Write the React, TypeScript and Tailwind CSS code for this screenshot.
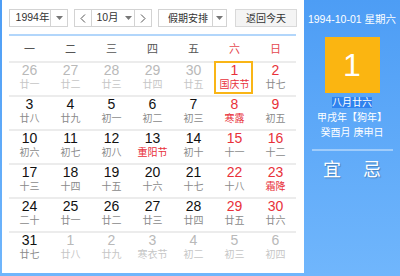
import React from 'react';

type Day = { d: number; l: string; other?: boolean; fest?: boolean; today?: boolean };

const weekNames = ['一', '二', '三', '四', '五', '六', '日'];

const o = (d: number, l: string, fest = false): Day => ({ d, l, other: true, fest });
const c = (d: number, l: string, fest = false): Day => ({ d, l, fest });

const weeks: Day[][] = [
  [o(26, '廿一'), o(27, '廿二'), o(28, '廿三'), o(29, '廿四'), o(30, '廿五'), { d: 1, l: '国庆节', fest: true, today: true }, c(2, '廿七')],
  [c(3, '廿八'), c(4, '廿九'), c(5, '初一'), c(6, '初二'), c(7, '初三'), c(8, '寒露', true), c(9, '初五')],
  [c(10, '初六'), c(11, '初七'), c(12, '初八'), c(13, '重阳节', true), c(14, '初十'), c(15, '十一'), c(16, '十二')],
  [c(17, '十三'), c(18, '十四'), c(19, '十五'), c(20, '十六'), c(21, '十七'), c(22, '十八'), c(23, '霜降', true)],
  [c(24, '二十'), c(25, '廿一'), c(26, '廿二'), c(27, '廿三'), c(28, '廿四'), c(29, '廿五'), c(30, '廿六')],
  [c(31, '廿七'), o(1, '廿八'), o(2, '廿九'), o(3, '寒衣节', true), o(4, '初二'), o(5, '初三'), o(6, '初四')],
];

const Caret = () => (
  <svg width="7" height="4" viewBox="0 0 7 4">
    <path d="M0 0h7L3.5 4z" fill="#777" />
  </svg>
);

const Chevron = ({ right }: { right?: boolean }) => (
  <svg width="6" height="9" viewBox="0 0 6 9">
    <path d={right ? 'M1 0.5l4 4-4 4' : 'M5 0.5l-4 4 4 4'} fill="none" stroke="#555" strokeWidth="1" />
  </svg>
);

const DayCell = ({ day, col }: { day: Day; col: number }) => {
  const weekend = col >= 5;
  const numColor = day.other ? 'text-[#b9b9b9]' : weekend ? 'text-[#e8313a]' : 'text-[#111]';
  const lunarColor = day.other ? 'text-[#c6c6c6]' : day.fest ? 'text-[#e8313a]' : 'text-[#8a8a8a]';
  return (
    <div className="relative flex flex-col items-center">
      {day.today && (
        <span className="absolute -top-[2px] left-0 w-[39px] h-[33px] border-2 border-[#f9b516]" />
      )}
      <span className={`text-[14px] leading-[15px] font-['Liberation_Sans',sans-serif] ${numColor}`}>{day.d}</span>
      <span className={`mt-[1px] text-[10px] leading-[12px] ${lunarColor}`}>{day.l}</span>
    </div>
  );
};

export default function App() {
  return (
    <div className="w-[400px] h-[276px] flex items-start pl-[2px] bg-gradient-to-b from-[#4d9df5] to-[#70b6fc] font-['Liberation_Sans','Noto_Sans_CJK_SC',sans-serif]">
      {/* calendar panel */}
      <div className="w-[302px] h-[273px] bg-white pl-[7px] pt-[9px]">
        {/* toolbar */}
        <div className="flex h-[18px] text-[10.5px] text-[#333]">
          <div className="flex w-[59px] border border-[#d3d3d3]">
            <div className="w-[40px] flex items-center justify-center pl-[5px]">1994年</div>
            <div className="flex-1 flex items-center justify-center border-l border-[#d3d3d3]">
              <Caret />
            </div>
          </div>
          <div className="ml-[6px] flex w-[78px] border border-[#d3d3d3]">
            <div className="w-[16px] flex items-center justify-center">
              <Chevron />
            </div>
            <div className="flex-1 flex items-center justify-center gap-[6px] border-x border-[#d3d3d3] pl-[2px]">
              <span>10月</span>
              <Caret />
            </div>
            <div className="w-[16px] flex items-center justify-center">
              <Chevron right />
            </div>
          </div>
          <div className="ml-[6px] flex w-[69px] border border-[#d3d3d3]">
            <div className="w-[53px] flex items-center pl-[9px] text-[10px]">假期安排</div>
            <div className="flex-1 flex items-center justify-center border-l border-[#d3d3d3]">
              <Caret />
            </div>
          </div>
          <div className="ml-[8px] w-[62px] flex items-center justify-center border border-[#d9d9d9] bg-[#f4f4f4] text-[10px]">
            返回今天
          </div>
        </div>

        <div className="mt-[7px] w-[287px] h-[2px] bg-[#b2d6fb]" />

        {/* week header */}
        <div className="grid grid-cols-7 w-[287px] h-[25px] items-center text-[11px] leading-[12px]">
          {weekNames.map((w, i) => (
            <div key={w} className={`text-center ${i >= 5 ? 'text-[#e5494f]' : 'text-[#555]'}`}>
              {w}
            </div>
          ))}
        </div>

        {/* days */}
        <div className="w-[287px]">
          {weeks.map((week, r) => (
            <div key={r} className="grid grid-cols-7 h-[34px] border-t-2 border-[#ececec]">
              {week.map((day, i) => (
                <DayCell key={i} day={day} col={i} />
              ))}
            </div>
          ))}
        </div>
      </div>

      {/* info panel */}
      <div className="w-[96px] flex flex-col items-center text-white">
        <div className="mt-[13px] text-[10.5px] leading-[12px] whitespace-nowrap">1994-10-01 星期六</div>
        <div className="mt-[12px] w-[55px] h-[56px] bg-[#fbb511] flex items-center justify-center">
          <span className="text-[32px] leading-[32px] font-['Liberation_Sans',sans-serif]">1</span>
        </div>
        <div className="mt-[4px] h-[11px] px-[0px] bg-[#2f82ee] text-[10px] leading-[11px]">八月廿六</div>
        <div className="mt-[4px] text-[10px] leading-[12px] whitespace-nowrap">甲戌年【狗年】</div>
        <div className="mt-[3px] text-[10px] leading-[12px] whitespace-nowrap">癸酉月 庚申日</div>
        <div className="mt-[10px] w-[81px] h-[2px] bg-white/40" />
        <div className="mt-[9px] flex gap-[22px] text-[18px] leading-[20px] [text-shadow:1px_1px_1px_rgba(0,0,0,0.25)]">
          <span>宜</span>
          <span>忌</span>
        </div>
      </div>
    </div>
  );
}
